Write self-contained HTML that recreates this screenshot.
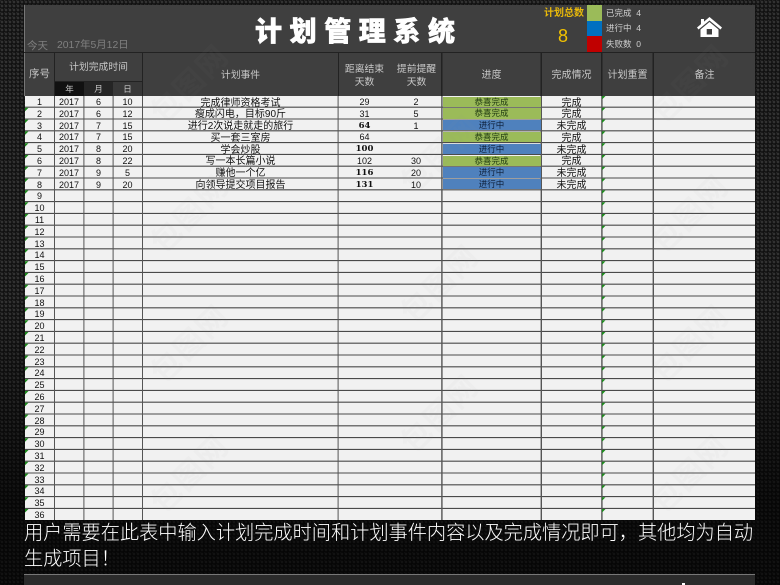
<!DOCTYPE html>
<html lang="zh">
<head>
<meta charset="utf-8">
<style>
html,body{margin:0;padding:0}
body{width:780px;height:585px;overflow:hidden;position:relative;background-color:#111;
background-image:radial-gradient(circle at 2px 2px,#333 0,#333 1px,transparent 1.6px),radial-gradient(circle at 0 0,#262626 0,#262626 1px,transparent 1.6px);background-size:4px 4px;
font-family:"Liberation Sans","Noto Sans CJK SC",sans-serif}
.a{position:absolute}
.h{position:absolute;color:#c8c8c8;font-size:10.5px;line-height:13px;text-align:center}
.c{position:absolute;top:97px;font-size:9px;color:#111;text-align:center;white-space:nowrap}
.c div{height:11.8px;line-height:11.8px}
.z{font-size:10px;top:97.5px}
.st{position:absolute;left:442.5px;width:98px;height:10.4px;line-height:11.5px;font-size:8.5px;text-align:center;color:#1f3a10}
.g{background:#9bbb59}
.b{background:#4f81bd;color:#0d1f3a}
.s{font-family:"DejaVu Serif",serif;font-weight:bold;font-size:8.5px}
.lab{position:absolute;left:606px;font-size:8.5px;color:#d0d0d0;line-height:11px}
.wm{position:absolute;color:#999;opacity:.04;font-size:30px;font-weight:bold;transform:rotate(-45deg);white-space:nowrap;letter-spacing:2px}
</style>
</head>
<body>
<div class="a" style="left:0;top:300px;width:780px;height:285px;background:linear-gradient(rgba(0,0,0,0),rgba(0,0,0,.65) 70%)"></div>
<div class="a" style="left:24px;top:5px;width:731px;height:47px;background:#3f3f3f;border-left:1px solid #777;box-sizing:border-box"></div>
<div class="a" style="left:24px;top:52px;width:731px;height:43.5px;background:#3f3f3f;border-left:1px solid #777;box-sizing:border-box"></div>
<div class="a" style="left:24px;top:52px;width:731px;height:1px;background:#222"></div>

<div class="a" style="left:27px;top:39px;font-size:10.5px;line-height:14px;color:#808080">今天</div>
<div class="a" style="left:57px;top:39px;font-size:10.4px;line-height:14px;color:#808080">2017年5月12日</div>
<div class="a" style="left:255px;top:11px;font-size:27px;line-height:38px;font-weight:900;font-family:'Noto Sans CJK SC',sans-serif;color:#fff;letter-spacing:7.6px;white-space:nowrap;-webkit-text-stroke:.6px #fff">计划管理系统</div>

<div class="a" style="left:544px;top:7px;font-size:10px;line-height:13px;font-weight:bold;color:#e8b90a;white-space:nowrap">计划总数</div>
<div class="a" style="left:558px;top:23px;font-size:18px;line-height:26px;color:#f2c200">8</div>
<div class="a" style="left:587px;top:5px;width:14.5px;height:15.5px;background:#9bbb59"></div>
<div class="a" style="left:587px;top:20.5px;width:14.5px;height:15.5px;background:#0070c0"></div>
<div class="a" style="left:587px;top:36px;width:14.5px;height:16px;background:#c00000"></div>
<div class="lab" style="top:7.5px">已完成&nbsp; 4</div>
<div class="lab" style="top:23px">进行中&nbsp; 4</div>
<div class="lab" style="top:39px">失败数&nbsp; 0</div>
<svg class="a" style="left:696px;top:15px" width="27" height="24" viewBox="0 0 27 24"><path d="M1 12.5 13.5 2 26 12.5 24.5 14.5 13.5 5.5 2.5 14.5Z M5 4h3v3l-3 3Z" fill="#fff"/><path d="M4.5 14.5 13.5 7 22.5 14.5V22H4.5ZM10.7 14v5.5h5.3V14Z" fill="#fff" fill-rule="evenodd"/></svg>

<!-- header lines -->
<svg class="a" style="left:0;top:52px" width="780" height="44"><g fill="#222"><rect x="54" width="1" height="44"/><rect x="142" width="1" height="44"/><rect x="338" width="1" height="44"/><rect x="441" width="1.5" height="44"/><rect x="540.5" width="1.5" height="44"/><rect x="601" width="1.5" height="44"/><rect x="652.5" width="1.5" height="44"/><rect x="54" y="29" width="88" height="1"/></g></svg>
<div class="a" style="left:55px;top:82px;width:29px;height:13.5px;background:#111"></div>
<div class="a" style="left:84px;top:82px;width:29px;height:13.5px;background:#252525"></div>
<div class="a" style="left:113px;top:82px;width:29px;height:13.5px;background:#383838"></div>

<div class="h" style="left:25px;width:29px;top:68px">序号</div>
<div class="h" style="left:55px;width:87px;top:61px;font-size:9.8px">计划完成时间</div>
<div class="h" style="left:55px;width:29px;top:82.5px;font-size:8.5px">年</div>
<div class="h" style="left:84px;width:29px;top:82.5px;font-size:8.5px">月</div>
<div class="h" style="left:113px;width:29px;top:82.5px;font-size:8.5px">日</div>
<div class="h" style="left:143px;width:195px;top:68.5px;font-size:9.8px">计划事件</div>
<div class="h" style="left:338px;width:55px;top:62.5px;font-size:9.8px"><span style="display:block;width:41px;line-height:13px;margin-left:6px">距离结束天数</span></div>
<div class="h" style="left:391px;width:51px;top:62.5px;font-size:9.8px"><span style="display:block;width:41px;line-height:13px;margin-left:5px">提前提醒天数</span></div>
<div class="h" style="left:442px;width:99px;top:68.5px;font-size:10px">进度</div>
<div class="h" style="left:542px;width:59px;top:68.5px;font-size:10px">完成情况</div>
<div class="h" style="left:602px;width:51px;top:68.5px;font-size:10px">计划重置</div>
<div class="h" style="left:654px;width:101px;top:68.5px;font-size:10px">备注</div>

<!-- grid -->
<svg class="a" style="left:25px;top:95.5px" width="730" height="424">
<rect width="730" height="424" fill="#f1f1f1"/>
<path fill="none" stroke="#4a4a4a" stroke-width="1.1" d="M0 11.2H730M0 23H730M0 34.8H730M0 46.6H730M0 58.4H730M0 70.2H730M0 82H730M0 93.8H730M0 105.6H730M0 117.4H730M0 129.2H730M0 141H730M0 152.8H730M0 164.6H730M0 176.4H730M0 188.2H730M0 200H730M0 211.8H730M0 223.6H730M0 235.4H730M0 247.2H730M0 259H730M0 270.8H730M0 282.6H730M0 294.4H730M0 306.2H730M0 318H730M0 329.8H730M0 341.6H730M0 353.4H730M0 365.2H730M0 377H730M0 388.8H730M0 400.6H730M0 412.4H730"/>
<g fill="#555"><rect x="29" width="1" height="424"/><rect x="58.4" width="1" height="424"/><rect x="87.6" width="1" height="424"/><rect x="117" width="1" height="424"/><rect x="312.6" width="1" height="424"/><rect x="416.2" width="1.4" height="424"/><rect x="515.6" width="1.4" height="424"/><rect x="576.2" width="1.4" height="424"/><rect x="627.6" width="1.4" height="424"/></g>
<path fill="#1d8a1d" d="M0 11.8h3.5l-3.5 3.5zM0 23.6h3.5l-3.5 3.5zM0 35.4h3.5l-3.5 3.5zM0 47.2h3.5l-3.5 3.5zM0 59h3.5l-3.5 3.5zM0 70.8h3.5l-3.5 3.5zM0 82.6h3.5l-3.5 3.5zM0 94.4h3.5l-3.5 3.5zM0 106.2h3.5l-3.5 3.5zM0 118h3.5l-3.5 3.5zM0 129.8h3.5l-3.5 3.5zM0 141.6h3.5l-3.5 3.5zM0 153.4h3.5l-3.5 3.5zM0 165.2h3.5l-3.5 3.5zM0 177h3.5l-3.5 3.5zM0 188.8h3.5l-3.5 3.5zM0 200.6h3.5l-3.5 3.5zM0 212.4h3.5l-3.5 3.5zM0 224.2h3.5l-3.5 3.5zM0 236h3.5l-3.5 3.5zM0 247.8h3.5l-3.5 3.5zM0 259.6h3.5l-3.5 3.5zM0 271.4h3.5l-3.5 3.5zM0 283.2h3.5l-3.5 3.5zM0 295h3.5l-3.5 3.5zM0 306.8h3.5l-3.5 3.5zM0 318.6h3.5l-3.5 3.5zM0 330.4h3.5l-3.5 3.5zM0 342.2h3.5l-3.5 3.5zM0 354h3.5l-3.5 3.5zM0 365.8h3.5l-3.5 3.5zM0 377.6h3.5l-3.5 3.5zM0 389.4h3.5l-3.5 3.5zM0 401.2h3.5l-3.5 3.5zM0 413h3.5l-3.5 3.5z"/>
<path fill="#1d8a1d" transform="translate(577 0)" d="M0 0h3.5l-3.5 3.5zM0 11.8h3.5l-3.5 3.5zM0 23.6h3.5l-3.5 3.5zM0 35.4h3.5l-3.5 3.5zM0 47.2h3.5l-3.5 3.5zM0 59h3.5l-3.5 3.5zM0 70.8h3.5l-3.5 3.5zM0 82.6h3.5l-3.5 3.5zM0 94.4h3.5l-3.5 3.5zM0 106.2h3.5l-3.5 3.5zM0 118h3.5l-3.5 3.5zM0 129.8h3.5l-3.5 3.5zM0 141.6h3.5l-3.5 3.5zM0 153.4h3.5l-3.5 3.5zM0 165.2h3.5l-3.5 3.5zM0 177h3.5l-3.5 3.5zM0 188.8h3.5l-3.5 3.5zM0 200.6h3.5l-3.5 3.5zM0 212.4h3.5l-3.5 3.5zM0 224.2h3.5l-3.5 3.5zM0 236h3.5l-3.5 3.5zM0 247.8h3.5l-3.5 3.5zM0 259.6h3.5l-3.5 3.5zM0 271.4h3.5l-3.5 3.5zM0 283.2h3.5l-3.5 3.5zM0 295h3.5l-3.5 3.5zM0 306.8h3.5l-3.5 3.5zM0 318.6h3.5l-3.5 3.5zM0 330.4h3.5l-3.5 3.5zM0 342.2h3.5l-3.5 3.5zM0 354h3.5l-3.5 3.5zM0 365.8h3.5l-3.5 3.5zM0 377.6h3.5l-3.5 3.5zM0 389.4h3.5l-3.5 3.5zM0 401.2h3.5l-3.5 3.5zM0 413h3.5l-3.5 3.5z"/>
</svg>

<div class="st g" style="top:96.5px">恭喜完成</div>
<div class="st g" style="top:108.3px">恭喜完成</div>
<div class="st b" style="top:120.1px">进行中</div>
<div class="st g" style="top:131.9px">恭喜完成</div>
<div class="st b" style="top:143.7px">进行中</div>
<div class="st g" style="top:155.5px">恭喜完成</div>
<div class="st b" style="top:167.3px">进行中</div>
<div class="st b" style="top:179.1px">进行中</div>

<div class="c" style="left:25px;width:29px"><div>1</div><div>2</div><div>3</div><div>4</div><div>5</div><div>6</div><div>7</div><div>8</div><div>9</div><div>10</div><div>11</div><div>12</div><div>13</div><div>14</div><div>15</div><div>16</div><div>17</div><div>18</div><div>19</div><div>20</div><div>21</div><div>22</div><div>23</div><div>24</div><div>25</div><div>26</div><div>27</div><div>28</div><div>29</div><div>30</div><div>31</div><div>32</div><div>33</div><div>34</div><div>35</div></div>
<div class="a" style="left:25px;width:29px;top:509.5px;height:9.5px;overflow:hidden;font-size:9px;line-height:11.8px;color:#111;text-align:center">36</div>
<div class="c" style="left:55px;width:28px"><div>2017</div><div>2017</div><div>2017</div><div>2017</div><div>2017</div><div>2017</div><div>2017</div><div>2017</div></div>
<div class="c" style="left:84px;width:29px"><div>6</div><div>6</div><div>7</div><div>7</div><div>8</div><div>8</div><div>9</div><div>9</div></div>
<div class="c" style="left:113px;width:29px"><div>10</div><div>12</div><div>15</div><div>15</div><div>20</div><div>22</div><div>5</div><div>20</div></div>
<div class="c z" style="left:143px;width:195px"><div>完成律师资格考试</div><div>瘦成闪电，目标90斤</div><div>进行2次说走就走的旅行</div><div>买一套三室房</div><div>学会炒股</div><div>写一本长篇小说</div><div>赚他一个亿</div><div>向领导提交项目报告</div></div>
<div class="c" style="left:339px;width:51px"><div>29</div><div>31</div><div class="s">64</div><div>64</div><div class="s">100</div><div>102</div><div class="s">116</div><div class="s">131</div></div>
<div class="c" style="left:391px;width:50px"><div>2</div><div>5</div><div>1</div><div></div><div></div><div>30</div><div>20</div><div>10</div></div>
<div class="c z" style="left:542px;width:59px"><div>完成</div><div>完成</div><div>未完成</div><div>完成</div><div>未完成</div><div>完成</div><div>未完成</div><div>未完成</div></div>

<div class="wm" style="left:140px;top:60px">包图网</div>
<div class="wm" style="left:140px;top:190px">包图网</div>
<div class="wm" style="left:140px;top:320px">包图网</div>
<div class="wm" style="left:140px;top:450px">包图网</div>
<div class="wm" style="left:390px;top:130px">包图网</div>
<div class="wm" style="left:390px;top:260px">包图网</div>
<div class="wm" style="left:390px;top:390px">包图网</div>
<div class="wm" style="left:640px;top:60px">包图网</div>
<div class="wm" style="left:640px;top:190px">包图网</div>
<div class="wm" style="left:640px;top:320px">包图网</div>
<div class="wm" style="left:640px;top:450px">包图网</div>

<div class="a" style="left:24px;top:521px;width:735px;font-size:19.2px;font-weight:300;line-height:26px;color:#fff">用户需要在此表中输入计划完成时间和计划事件内容以及完成情况即可，其他均为自动<br>生成项目！</div>
<div class="a" style="left:24px;top:574px;width:731px;height:11px;background:#2b2b2b;border-top:1px solid #777;box-sizing:border-box"></div>
<div class="a" style="left:682px;top:583px;width:3px;height:2px;background:#fff"></div>
</body>
</html>
